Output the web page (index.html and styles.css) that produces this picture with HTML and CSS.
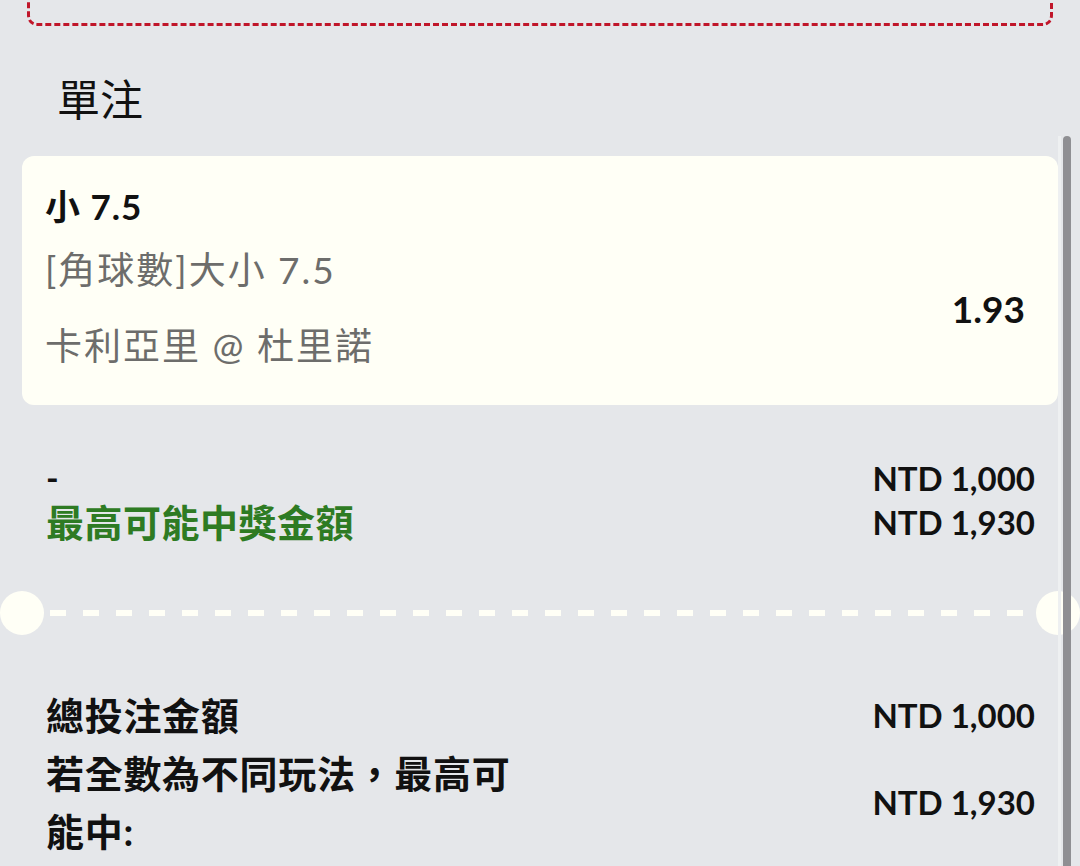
FILE: index.html
```html
<!DOCTYPE html>
<html lang="zh-Hant">

<head>
  <meta charset="UTF-8" />
  <meta name="viewport" content="width=device-width, initial-scale=1.0" />
  <title>單注</title>
  <link rel="stylesheet" href="styles.css">
</head>

<body>
  <div class="promo-box"></div>

  <h2 class="section-title">單注</h2>

  <div class="bet-card">
    <div class="bet-info">
      <div class="bet-pick">小 7.5</div>
      <div class="bet-market">[角球數]大小 7.5</div>
      <div class="bet-match">卡利亞里 @ 杜里諾</div>
    </div>
    <div class="bet-odds">1.93</div>
  </div>

  <div class="bet-amounts">
    <div class="amount-row">
      <span class="amount-label">-</span>
      <span class="amount-value">NTD 1,000</span>
    </div>
    <div class="amount-row">
      <span class="amount-label win">最高可能中獎金額</span>
      <span class="amount-value">NTD 1,930</span>
    </div>
  </div>

  <div class="ticket-divider">
    <span class="notch"></span>
    <span class="dash-line"></span>
    <span class="notch"></span>
  </div>

  <div class="totals">
    <div class="total-row">
      <span class="total-label">總投注金額</span>
      <span class="amount-value">NTD 1,000</span>
    </div>
    <div class="total-row">
      <span class="total-label">若全數為不同玩法，最高可能中:</span>
      <span class="amount-value">NTD 1,930</span>
    </div>
  </div>

  <!-- scrollbar overlay -->
  <div class="scroll-track"><div class="scroll-thumb"></div></div>
</body>

</html>
```

FILE: styles.css
```css
* {
  box-sizing: border-box;
}

body {
  font-family: Lato, 'Noto Sans CJK TC', sans-serif;
  background: #e5e7ea;
  color: #111;
  margin: 0;
  overflow: hidden;
}

.promo-box {
  height: 86px;
  margin: -60px 27px 0 27px;
  border: 3px dashed #c0162a;
  border-radius: 10px;
}

.section-title {
  margin: 0;
  padding: 44px 0 26px 57px;
  font-size: 43px;
  font-weight: 400;
  line-height: 60px;
}

.bet-card {
  display: flex;
  justify-content: space-between;
  height: 249px;
  margin: 0 22px;
  padding: 25px 33px 0 23px;
  background: #fffff6;
  border-radius: 12px;
}

.bet-pick {
  font-size: 35px;
  font-weight: 700;
  line-height: 50px;
  letter-spacing: 1px;
}

.bet-market,
.bet-match {
  font-size: 37px;
  line-height: 50px;
  letter-spacing: 2px;
  color: #6d6d6b;
}

.bet-market {
  margin-top: 14px;
}

.bet-match {
  margin-top: 26px;
}

.bet-odds {
  margin-top: 103px;
  font-size: 37px;
  font-weight: 700;
  line-height: 50px;
}

.bet-amounts {
  padding: 51px 45px 0 46px;
}

.amount-row {
  display: flex;
  justify-content: space-between;
  line-height: 44px;
}

.amount-label {
  font-size: 34px;
  font-weight: 700;
}

.amount-label.win {
  font-size: 38px;
  letter-spacing: 0.5px;
  color: #2e7b23;
}

.amount-value {
  font-size: 33px;
  font-weight: 700;
}

.ticket-divider {
  display: flex;
  align-items: center;
  gap: 6px;
  margin-top: 47px;
}

.notch {
  width: 44px;
  height: 44px;
  border-radius: 50%;
  background: #fffff6;
}

.dash-line {
  flex: 1;
  height: 6px;
  background: repeating-linear-gradient(90deg, #fffff6 0 16px, transparent 16px 33px);
}

.totals {
  padding: 51px 45px 0 46px;
}

.total-row {
  display: flex;
  justify-content: space-between;
  align-items: center;
  line-height: 58px;
}

.total-label {
  max-width: 480px;
  font-size: 38px;
  font-weight: 700;
  letter-spacing: 0.7px;
}

.scroll-track {
  position: fixed;
  top: 136px;
  right: 9px;
  bottom: 0;
  width: 13px;
  border-left: 3px solid #eef0f1;
}

.scroll-thumb {
  width: 8px;
  height: 100%;
  margin-left: 2px;
  background: #8f8f93;
  border-radius: 4px 4px 0 0;
}
```
